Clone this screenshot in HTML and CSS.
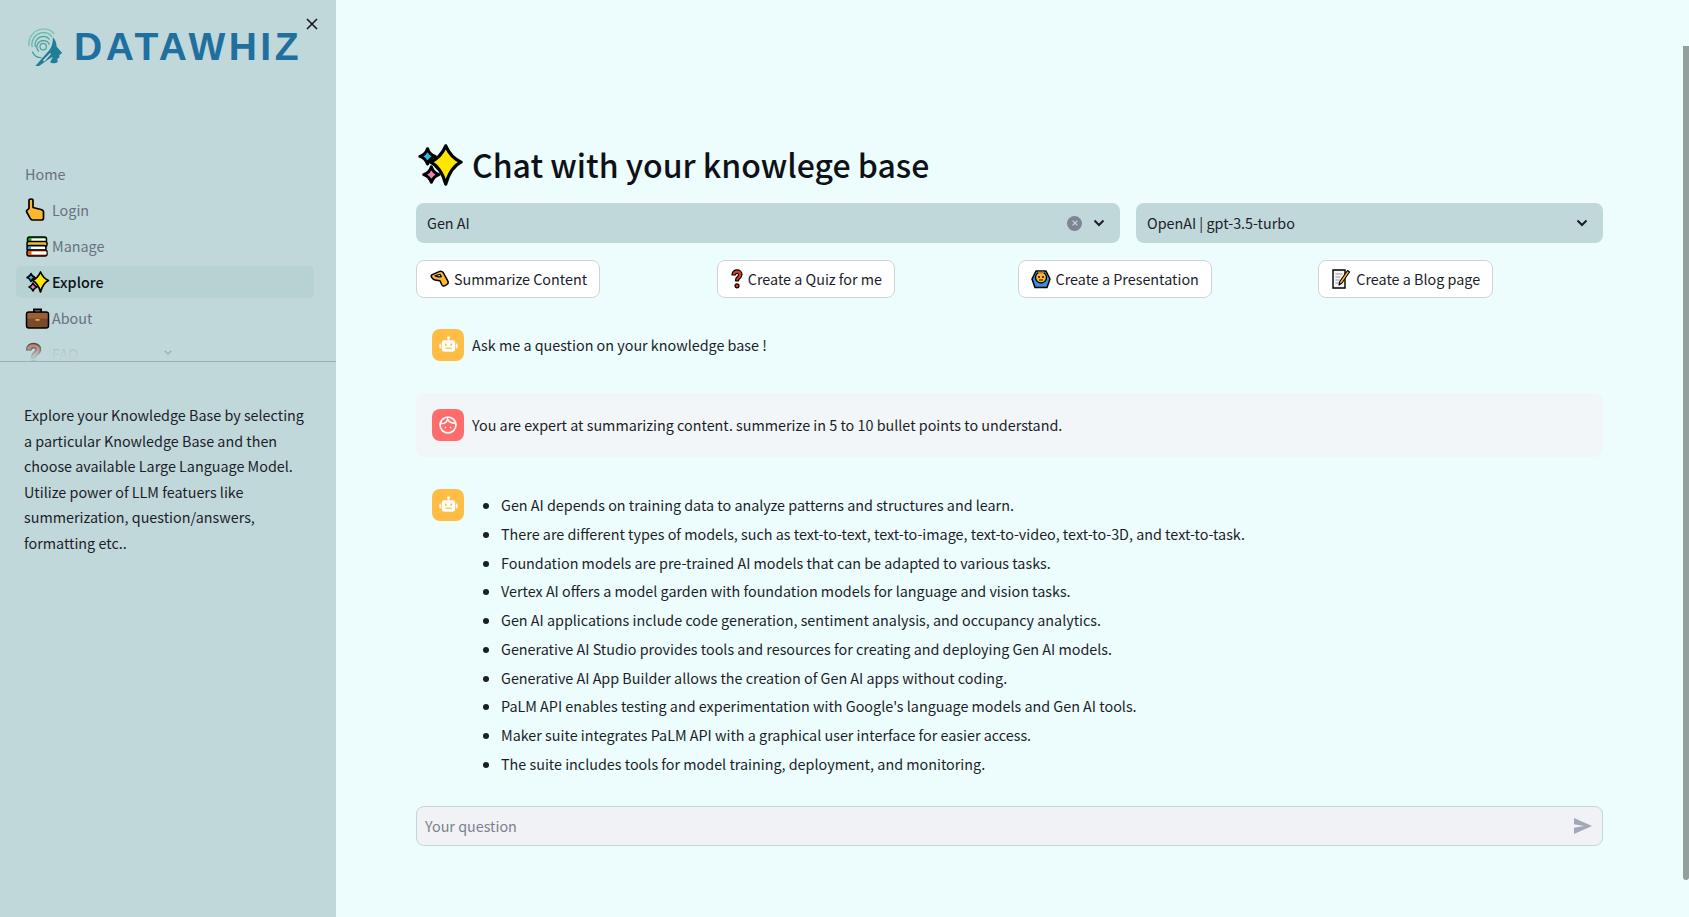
FILE: index.html
```html
<!DOCTYPE html>
<html lang="en">
<head>
<meta charset="utf-8">
<title>Chat with your knowledge base</title>
<link rel="stylesheet" href="styles.css">
</head>
<body>
<svg class="defs" width="0" height="0" aria-hidden="true">
  <defs>
    <symbol id="sparkles" viewBox="0 0 24 24">
      <path d="M15 2Q17.500 8 23 10.500 17.500 13 15 22 12.500 13 7 10.500 12.500 8 15 2z" fill="#ffe600" stroke="#000" stroke-width="1.700" stroke-linejoin="round"/>
      <path d="M5.500 3.500Q6.500 6.500 9.500 7.500 6.500 8.500 5.500 11.500 4.500 8.500 1.500 7.500 4.500 6.500 5.500 3.500z" fill="#2fb8e6" stroke="#000" stroke-width="1.600" stroke-linejoin="round"/>
      <path d="M7.500 13Q8.500 16 11.500 17 8.500 18 7.500 21 6.500 18 3.500 17 6.500 16 7.500 13z" fill="#f07fb5" stroke="#000" stroke-width="1.600" stroke-linejoin="round"/>
    </symbol>
    <symbol id="bot" viewBox="0 0 24 24">
      <g fill="#fff">
        <circle cx="12" cy="3.800" r="1.500"/>
        <rect x="11.200" y="4" width="1.600" height="3"/>
        <path d="M7.500 6.500h9a2.500 2.500 0 0 1 2.500 2.500v7a2.500 2.500 0 0 1-2.500 2.500h-9A2.500 2.500 0 0 1 5 16V9a2.500 2.500 0 0 1 2.500-2.500z"/>
        <rect x="2.500" y="10" width="1.800" height="5" rx=".9"/>
        <rect x="19.700" y="10" width="1.800" height="5" rx=".9"/>
      </g>
      <rect x="8.200" y="10" width="2" height="2" fill="#ffbd45"/>
      <rect x="13.800" y="10" width="2" height="2" fill="#ffbd45"/>
      <rect x="8.500" y="14.300" width="7" height="1.200" fill="#ffbd45"/>
    </symbol>
  </defs>
</svg>
<div class="app">
  <aside class="sidebar">
    <header class="brand">
      <svg class="brand-mark" viewBox="0 0 40 44" aria-hidden="true">
        <g fill="none" stroke-linecap="round">
          <path d="M2 20C1 10 9 2 18 2c5 0 9 2 11 5" stroke="#6cc0a4" stroke-width="1.300"/>
          <path d="M5.500 21C4 12 11 6 18 6c4 0 7 2 8.500 4" stroke="#5fb9a0" stroke-width="1.300"/>
          <path d="M9 21c-1.500-6 3.500-11 9-11 2.500 0 4.500 1 6 3" stroke="#49a89d" stroke-width="1.300"/>
          <path d="M12.500 26c-4-5-1-11.500 5.500-11.500 3 0 5 1.500 6 4" stroke="#3f9f99" stroke-width="1.300"/>
          <circle cx="17.500" cy="21" r="3.500" stroke="#49a89d" stroke-width="1.400"/>
          <path d="M6 27c2 4 5 6 9 6" stroke="#3f9f99" stroke-width="1.300"/>
        </g>
        <path d="M9 42 24 25c3-4 4-8 4-14 3 3 4 7 4 10l6 7-3 2 0 3-2 1 0 4c-3 2-6 1-8 0l3-6-5 3-10 7z" fill="#1f7f96"/>
        <path d="M17 36l8-8 1 1-7 8z" fill="#c1d8da"/>
      </svg>
      <span class="brand-name">DATAWHIZ</span>
      <button class="close" type="button" aria-label="Close">
        <svg viewBox="0 0 12 12" width="12" height="12"><path d="M1 1l10 10M11 1 1 11" stroke="#111" stroke-width="1.500"/></svg>
      </button>
    </header>
    <nav class="nav">
      <a class="nav-item">Home</a>
      <a class="nav-item">
        <svg class="nav-icon" viewBox="0 0 24 24"><path d="M3.500 2.500c0-2 4-2 4 0v7l8 2c1.500.4 2.500 1.500 2.500 2.500v6c0 1-.8 2-2 2H7c-1 0-1.500-.5-2-1.200L1.200 14c-.6-1 0-1.800 1-2.300l1.300-1.200z" fill="#fdb62f" stroke="#000" stroke-width="1.700" stroke-linejoin="round"/></svg>
        <span>Login</span>
      </a>
      <a class="nav-item">
        <svg class="nav-icon" viewBox="0 0 24 24">
          <rect x="2" y="3" width="19" height="5.500" rx="2" fill="#1fa22e" stroke="#000" stroke-width="1.500"/>
          <rect x="6" y="4.500" width="14" height="2.500" fill="#fff"/>
          <rect x="1.500" y="7.500" width="20" height="5" rx="2" fill="#fdb62f" stroke="#000" stroke-width="1.500"/>
          <rect x="1.500" y="11.500" width="19" height="5" rx="2" fill="#3e9fe0" stroke="#000" stroke-width="1.500"/>
          <rect x="5.500" y="12.800" width="14" height="2.400" fill="#fff"/>
          <rect x="1.500" y="16" width="20" height="6" rx="2" fill="#ef5b1a" stroke="#000" stroke-width="1.500"/>
          <rect x="6" y="17.500" width="15" height="3" fill="#fff"/>
        </svg>
        <span>Manage</span>
      </a>
      <a class="nav-item active">
        <svg class="nav-icon"><use href="#sparkles"/></svg>
        <span>Explore</span>
      </a>
      <a class="nav-item">
        <svg class="nav-icon" viewBox="0 0 24 24">
          <path d="M8.500 7V3.500h7V7" fill="none" stroke="#000" stroke-width="2"/>
          <path d="M9.500 6V4.500h5V6" fill="none" stroke="#7a4a2a" stroke-width="1"/>
          <rect x="1" y="6" width="22" height="16" rx="2.500" fill="#7a4a2a" stroke="#000" stroke-width="1.500"/>
          <rect x="2" y="7" width="20" height="5.500" fill="#96603a"/>
          <rect x="10" y="13" width="4" height="1.800" fill="#f5a81c"/>
        </svg>
        <span>About</span>
      </a>
      <a class="nav-item">
        <svg class="nav-icon" viewBox="0 0 24 24"><g transform="translate(-4)"><path d="M5 8c0-4 3-6.500 7-6.500s7 2.500 7 6c0 3-2 4.500-3.500 5.500-1 .7-1.500 1.500-1.500 3H10c0-3 1-4.500 3-6 1-.7 1.500-1.300 1.500-2.500 0-1-1-1.800-2.500-1.800S9.500 6.800 9.500 8z" fill="#e23b1e" stroke="#000" stroke-width="1.500" stroke-linejoin="round"/><circle cx="12" cy="20.500" r="2.300" fill="#e23b1e" stroke="#000" stroke-width="1.500"/></g></svg>
        <span>FAQ</span>
        <svg class="nav-caret" viewBox="0 0 10 6" width="8" height="5"><path d="M1 1l4 4 4-4" fill="none" stroke="#333" stroke-width="1.500"/></svg>
      </a>
    </nav>
    <p class="sidebar-text">Explore your Knowledge Base by selecting a particular Knowledge Base and then choose available Large Language Model. Utilize power of LLM featuers like summerization, question/answers, formatting etc..</p>
  </aside>

  <main class="main">
    <div class="content">
      <h1 class="title"><svg class="title-icon"><use href="#sparkles"/></svg>Chat with your knowlege base</h1>

      <div class="selects">
        <div class="select">
          <span class="select-value">Gen AI</span>
          <span class="clear"><svg viewBox="0 0 10 10" width="8" height="8"><path d="M2 2l6 6M8 2 2 8" stroke="#c1d8da" stroke-width="1.500"/></svg></span>
          <svg class="caret" viewBox="0 0 12 8"><path d="M1.500 1.500 6 6l4.500-4.500" fill="none" stroke="#1b1d29" stroke-width="2"/></svg>
        </div>
        <div class="select">
          <span class="select-value">OpenAI | gpt-3.5-turbo</span>
          <svg class="caret" viewBox="0 0 12 8"><path d="M1.500 1.500 6 6l4.500-4.500" fill="none" stroke="#1b1d29" stroke-width="2"/></svg>
        </div>
      </div>

      <div class="actions">
        <div><button class="action" type="button">
          <svg class="action-icon wide" viewBox="0 0 24 20"><path d="M3 5.500 11 2c2-.8 3.500-.3 4.500 1l5 9c.8 1.500.5 3-1 4l-2 1.300c-1.300.8-2.800.3-3.500-1L12 12 6.500 11C3.500 10.500 1.500 6.500 3 5.500z" fill="#fdb62f" stroke="#000" stroke-width="1.600" stroke-linejoin="round"/><path d="M6.500 6.500 12 5l1.500 2.500c-2.500.5-5 .3-7-1z" fill="#fff3cf" stroke="#000" stroke-width="1.300" stroke-linejoin="round"/></svg>
          Summarize Content</button></div>
        <div><button class="action" type="button">
          <svg class="action-icon narrow" viewBox="0 0 14 22"><path d="M1.500 6.500C1.500 3 4 1 7 1s5.500 2 5.500 5c0 2.500-1.500 3.800-2.700 4.700-.8.600-1.100 1.300-1.100 2.300H5.300c0-2.300.7-3.500 2.200-4.700.8-.6 1.200-1.200 1.200-2 0-.8-.7-1.400-1.700-1.400s-1.700.7-1.700 1.700z" fill="#e23b1e" stroke="#000" stroke-width="1.300" stroke-linejoin="round"/><circle cx="7" cy="18.500" r="2.200" fill="#e23b1e" stroke="#000" stroke-width="1.300"/></svg>
          Create a Quiz for me</button></div>
        <div><button class="action" type="button">
          <svg class="action-icon" viewBox="0 0 20 20"><path d="M5 2h10l4 8-3 8.500H4L1 10z" fill="#3e8fd9" stroke="#000" stroke-width="1.500" stroke-linejoin="round"/><circle cx="10" cy="8.500" r="5.500" fill="#fdb62f" stroke="#000" stroke-width="1.300"/><circle cx="8" cy="8" r=".9"/><circle cx="12" cy="8" r=".9"/><path d="M8 11h4" stroke="#000" stroke-width="1"/><path d="M7 2.500h6v2H7z" fill="#c9781c"/></svg>
          Create a Presentation</button></div>
        <div><button class="action" type="button">
          <svg class="action-icon" viewBox="0 0 20 20"><path d="M2 1h12v18H2z" fill="#f4f4f4" stroke="#000" stroke-width="1.400"/><path d="M4.500 5h7M4.500 8h5M4.500 11h4M4.500 14h4" stroke="#9a9a9a" stroke-width="1"/><path d="m16.500 1.500 2 1.500L11 14l-3 2 .8-3.500z" fill="#fdb62f" stroke="#000" stroke-width="1.100" stroke-linejoin="round"/></svg>
          Create a Blog page</button></div>
      </div>

      <section class="messages">
        <article class="message">
          <span class="avatar bot"><svg viewBox="0 0 24 24" width="23" height="23"><use href="#bot"/></svg></span>
          <p class="message-text">Ask me a question on your knowledge base !</p>
        </article>
        <article class="message user">
          <span class="avatar person">
            <svg viewBox="0 0 24 24" width="20" height="20" fill="none" stroke="#fff" stroke-width="2"><circle cx="12" cy="12" r="9.500"/><path d="M3 10c4 1 7-1 8.500-5 1.500 3 5 5 9.500 5" stroke-width="1.800"/><path d="M8 15h2M14 15h2M9 14v2M15 14v2" stroke-width="1"/></svg>
          </span>
          <p class="message-text">You are expert at summarizing content. summerize in 5 to 10 bullet points to understand.</p>
        </article>
        <article class="message">
          <span class="avatar bot"><svg viewBox="0 0 24 24" width="23" height="23"><use href="#bot"/></svg></span>
          <ul class="message-list">
            <li>Gen AI depends on training data to analyze patterns and structures and learn.</li>
            <li>There are different types of models, such as text-to-text, text-to-image, text-to-video, text-to-3D, and text-to-task.</li>
            <li>Foundation models are pre-trained AI models that can be adapted to various tasks.</li>
            <li>Vertex AI offers a model garden with foundation models for language and vision tasks.</li>
            <li>Gen AI applications include code generation, sentiment analysis, and occupancy analytics.</li>
            <li>Generative AI Studio provides tools and resources for creating and deploying Gen AI models.</li>
            <li>Generative AI App Builder allows the creation of Gen AI apps without coding.</li>
            <li>PaLM API enables testing and experimentation with Google's language models and Gen AI tools.</li>
            <li>Maker suite integrates PaLM API with a graphical user interface for easier access.</li>
            <li>The suite includes tools for model training, deployment, and monitoring.</li>
          </ul>
        </article>
      </section>

      <div class="chat-input">
        <span class="placeholder">Your question</span>
        <svg class="send" viewBox="0 0 18 16"><path d="M0 0 18 8 0 16V9.800L10 8 0 6.200z" fill="#a3a8b8"/></svg>
      </div>
    </div>
    <div class="scrollbar"><div class="scrollbar-thumb"></div></div>
  </main>
</div>
</body>
</html>
```
FILE: styles.css
```css
* { box-sizing: border-box; }
html, body { height: 100%; }
body {
  margin: 0;
  overflow: hidden;
  background: #edfdfd;
  color: #1b1d29;
  font-family: "Noto Sans CJK SC", "Noto Sans", sans-serif;
  font-size: 14.350px;
}
.defs { position: absolute; }
.app { display: flex; height: 917px; }

.sidebar {
  flex: 0 0 336px;
  background: #c1d8da;
  display: flex;
  flex-direction: column;
}
.brand {
  position: relative;
  height: 158px;
  display: flex;
  align-items: flex-start;
  padding: 27px 0 0 27px;
}
.brand-mark { width: 37px; height: 41px; flex: none; }
.brand-name {
  margin: -2px 0 0 10px;
  font-family: "Liberation Sans", sans-serif;
  font-weight: 700;
  font-size: 39px;
  line-height: 44px;
  letter-spacing: 3.500px;
  color: #1f6f9f;
}
.close {
  position: absolute;
  top: 18px;
  left: 306px;
  width: 12px;
  height: 12px;
  padding: 0;
  border: 0;
  background: none;
  line-height: 0;
}

.nav {
  height: 204px;
  padding: 0 22px 0 16px;
  border-bottom: 1px solid #9bb0b2;
  overflow: hidden;
}
.nav-item {
  display: flex;
  align-items: center;
  height: 32px;
  margin-bottom: 4px;
  padding-left: 9px;
  border-radius: 5px;
  color: #66727f;
  line-height: 24px;
}
.nav-item:last-child {
  color: #98a6ac;
  position: relative;
  -webkit-mask-image: linear-gradient(to bottom, rgba(0,0,0,.8) 5%, rgba(0,0,0,.1) 60%);
  mask-image: linear-gradient(to bottom, rgba(0,0,0,.8) 5%, rgba(0,0,0,.1) 60%);
}
.nav-item.active {
  background: #b6d2d3;
  color: #0e1117;
  font-weight: 500;
}
.nav-icon { width: 25px; height: 24px; flex: none; margin-right: 2px; }
.nav-caret { position: absolute; left: 148px; top: 12px; }

.sidebar-text {
  margin: 40px 22px 0 24px;
  line-height: 25.600px;
  color: #1b1d29;
}

.main { flex: 1; display: flex; min-width: 0; }
.content { flex: 1; min-width: 0; padding: 138px 80px 0; }
.scrollbar { flex: 0 0 6px; padding-top: 46px; }
.scrollbar-thumb { height: 834px; background: #949e9c; border-radius: 0 0 3px 3px; }

.title {
  display: flex;
  align-items: center;
  height: 52px;
  margin: 0 0 13px;
  font-size: 32px;
  line-height: 52px;
  font-weight: 500;
  color: #0e1117;
}
.title-icon { width: 46px; height: 46px; margin: 2px 9px 0 1px; flex: none; }

.selects { display: grid; grid-template-columns: 704px 1fr; gap: 16px; }
.select {
  display: flex;
  align-items: center;
  height: 40px;
  padding: 0 15px 0 11px;
  background: #c1d8da;
  border-radius: 8px;
  line-height: 24px;
}
.select-value { flex: 1; }
.clear {
  width: 15px;
  height: 15px;
  margin-right: 11px;
  border-radius: 50%;
  background: #7f8494;
  display: flex;
  align-items: center;
  justify-content: center;
}
.caret { width: 12px; height: 8px; flex: none; }

.actions {
  display: grid;
  grid-template-columns: repeat(4, 1fr);
  gap: 16px;
  margin-top: 17px;
}
.action {
  display: inline-flex;
  align-items: center;
  height: 38px;
  padding: 0 12px;
  background: #fff;
  border: 1px solid #d0d4d8;
  border-radius: 8px;
  color: #1b1d29;
  font: inherit;
  line-height: 24px;
}
.action-icon { width: 20px; height: 20px; flex: none; margin-right: 5px; }
.action-icon.wide { width: 22px; margin-right: 3px; }
.action-icon.narrow { width: 14px; height: 20px; margin-right: 4px; }

.messages { display: flex; flex-direction: column; gap: 16px; margin-top: 15px; }
.message {
  display: flex;
  gap: 8px;
  padding: 16px;
  border-radius: 8px;
  min-height: 64px;
}
.message.user { background: #f2f6f8; }
.avatar {
  flex: 0 0 32px;
  width: 32px;
  height: 32px;
  border-radius: 8px;
  display: flex;
  align-items: center;
  justify-content: center;
}
.avatar.bot { background: #ffbd45; }
.avatar.person { background: #ff6c6c; }
.message-text { margin: 3px 0 0; line-height: 25.600px; }
.message-list {
  margin: 3px 0 0;
  padding: 0 0 0 29px;
  line-height: 25.600px;
}
.message-list li { margin-bottom: 3.200px; }
.message-list li:last-child { margin-bottom: 0; }

.chat-input {
  display: flex;
  align-items: center;
  justify-content: space-between;
  height: 40px;
  margin-top: 13px;
  padding: 0 10px 0 8px;
  background: #f0f2f6;
  border: 1px solid #c1d8da;
  border-radius: 8px;
}
.placeholder { color: #7c808c; }
.send { width: 18px; height: 16px; flex: none; }
```
